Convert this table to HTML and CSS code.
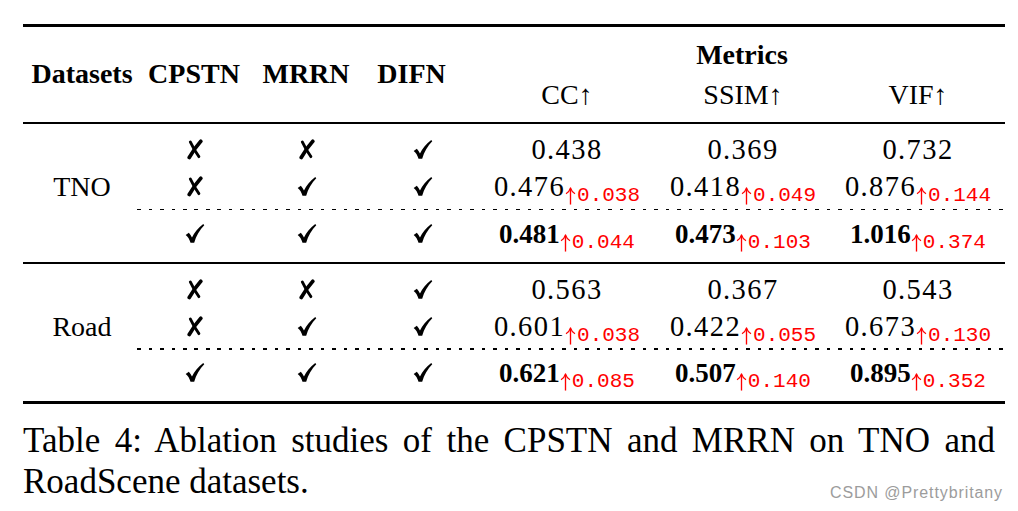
FILE: index.html
```html
<!DOCTYPE html>
<html lang="en">
<head>
<meta charset="utf-8">
<title>Table 4: Ablation studies</title>
<link rel="stylesheet" href="styles.css">
</head>
<body>
<svg class="defs" width="0" height="0" aria-hidden="true">
  <defs>
    <symbol id="chk" viewBox="0 0 20 20">
      <path d="M1.6 11.4 L4.6 9.3 C5.8 10.5 6.8 12.1 7.6 13.9 C9.9 8.9 13.6 4.6 18.3 0.9 L19.3 2.1 C14.9 6.4 11.5 12.2 9.7 18.9 L6.2 18.9 C5.3 15.5 3.8 13.2 1.6 11.4 Z"/>
    </symbol>
    <symbol id="crs" viewBox="0 0 20 20">
      <path d="M6 2.8 Q9.4 10.2 14.2 16.8" fill="none" stroke="#000" stroke-width="2.7" stroke-linecap="round"/>
      <path d="M16 2.2 Q10.4 8.4 5 17.6" fill="none" stroke="#000" stroke-width="3.5" stroke-linecap="round"/>
    </symbol>
    <symbol id="up" viewBox="0 0 12 20">
      <path d="M6 19.5 V2" fill="none" stroke="#ff0000" stroke-width="1.5"/>
      <path d="M1 7.5 Q4.6 5.6 6 1 Q7.4 5.6 11 7.5" fill="none" stroke="#ff0000" stroke-width="1.4" stroke-linejoin="round"/>
    </symbol>
  </defs>
</svg>
<main class="page">
  <section class="tbl">
    <div class="rule rule-thick"></div>
    <div class="head">
      <div class="h-side">Datasets</div>
      <div class="h-side">CPSTN</div>
      <div class="h-side">MRRN</div>
      <div class="h-side h-difn">DIFN</div>
      <div class="h-metrics">Metrics</div>
      <div class="h-metric">CC↑</div>
      <div class="h-metric">SSIM↑</div>
      <div class="h-metric">VIF↑</div>
    </div>
    <div class="rule rule-mid"></div>

    <div class="group">
      <div class="row">
        <div class="cell"></div>
        <div class="cell"><svg class="mk"><use href="#crs"/></svg></div>
        <div class="cell"><svg class="mk"><use href="#crs"/></svg></div>
        <div class="cell"><svg class="mk"><use href="#chk"/></svg></div>
        <div class="cell"><span class="num">0.438</span></div>
        <div class="cell"><span class="num">0.369</span></div>
        <div class="cell"><span class="num">0.732</span></div>
      </div>
      <div class="row">
        <div class="cell ds">TNO</div>
        <div class="cell"><svg class="mk"><use href="#crs"/></svg></div>
        <div class="cell"><svg class="mk"><use href="#chk"/></svg></div>
        <div class="cell"><svg class="mk"><use href="#chk"/></svg></div>
        <div class="cell"><span class="num">0.476</span><span class="gain"><svg class="arr"><use href="#up"/></svg>0.038</span></div>
        <div class="cell"><span class="num">0.418</span><span class="gain"><svg class="arr"><use href="#up"/></svg>0.049</span></div>
        <div class="cell"><span class="num">0.876</span><span class="gain"><svg class="arr"><use href="#up"/></svg>0.144</span></div>
      </div>
      <div class="dash"></div>
      <div class="row">
        <div class="cell"></div>
        <div class="cell"><svg class="mk"><use href="#chk"/></svg></div>
        <div class="cell"><svg class="mk"><use href="#chk"/></svg></div>
        <div class="cell"><svg class="mk"><use href="#chk"/></svg></div>
        <div class="cell"><span class="num-b">0.481</span><span class="gain"><svg class="arr"><use href="#up"/></svg>0.044</span></div>
        <div class="cell"><span class="num-b">0.473</span><span class="gain"><svg class="arr"><use href="#up"/></svg>0.103</span></div>
        <div class="cell"><span class="num-b">1.016</span><span class="gain"><svg class="arr"><use href="#up"/></svg>0.374</span></div>
      </div>
    </div>
    <div class="rule rule-mid"></div>

    <div class="group">
      <div class="row">
        <div class="cell"></div>
        <div class="cell"><svg class="mk"><use href="#crs"/></svg></div>
        <div class="cell"><svg class="mk"><use href="#crs"/></svg></div>
        <div class="cell"><svg class="mk"><use href="#chk"/></svg></div>
        <div class="cell"><span class="num">0.563</span></div>
        <div class="cell"><span class="num">0.367</span></div>
        <div class="cell"><span class="num">0.543</span></div>
      </div>
      <div class="row">
        <div class="cell ds">Road</div>
        <div class="cell"><svg class="mk"><use href="#crs"/></svg></div>
        <div class="cell"><svg class="mk"><use href="#chk"/></svg></div>
        <div class="cell"><svg class="mk"><use href="#chk"/></svg></div>
        <div class="cell"><span class="num">0.601</span><span class="gain"><svg class="arr"><use href="#up"/></svg>0.038</span></div>
        <div class="cell"><span class="num">0.422</span><span class="gain"><svg class="arr"><use href="#up"/></svg>0.055</span></div>
        <div class="cell"><span class="num">0.673</span><span class="gain"><svg class="arr"><use href="#up"/></svg>0.130</span></div>
      </div>
      <div class="dash"></div>
      <div class="row">
        <div class="cell"></div>
        <div class="cell"><svg class="mk"><use href="#chk"/></svg></div>
        <div class="cell"><svg class="mk"><use href="#chk"/></svg></div>
        <div class="cell"><svg class="mk"><use href="#chk"/></svg></div>
        <div class="cell"><span class="num-b">0.621</span><span class="gain"><svg class="arr"><use href="#up"/></svg>0.085</span></div>
        <div class="cell"><span class="num-b">0.507</span><span class="gain"><svg class="arr"><use href="#up"/></svg>0.140</span></div>
        <div class="cell"><span class="num-b">0.895</span><span class="gain"><svg class="arr"><use href="#up"/></svg>0.352</span></div>
      </div>
    </div>
    <div class="rule rule-thick"></div>
  </section>

  <p class="caption">Table 4: Ablation studies of the CPSTN and MRRN on TNO and <span class="cap-l2">RoadScene datasets.</span></p>
  <div class="wm">CSDN @Prettybritany</div>
</main>
</body>
</html>
```

FILE: styles.css
```css
html, body {
  margin: 0;
  padding: 0;
  background: #fff;
}

.defs {
  position: absolute;
  width: 0;
  height: 0;
  overflow: hidden;
}

.page {
  position: relative;
  width: 1018px;
  height: 511px;
  padding: 24px 0 0 23px;
  box-sizing: border-box;
  color: #000;
  font-family: "Liberation Serif", "Times New Roman", serif;
}

.tbl {
  width: 982px;
}

.rule {
  background: #000;
}
.rule-thick { height: 3px; }
.rule-mid { height: 2px; }

.head,
.row {
  display: grid;
  grid-template-columns: 118px 106px 118px 114px 176px 176px 174px;
  text-align: center;
}

.head {
  grid-template-rows: 44px 51px;
  font-size: 28px;
}

.h-side {
  grid-row: 1 / 3;
  display: flex;
  align-items: center;
  justify-content: center;
  font-weight: bold;
  line-height: 32px;
  padding-bottom: 2px;
}

.h-difn {
  padding-right: 21px;
}

.h-metrics {
  grid-column: 5 / 8;
  grid-row: 1;
  font-weight: bold;
  line-height: 32px;
  padding-top: 12px;
}

.h-metric {
  grid-row: 2;
  line-height: 32px;
  padding-top: 8px;
}

.group {
  padding: 7px 0 10px;
}

.row {
  height: 37px;
  line-height: 37px;
  font-size: 28.5px;
  white-space: nowrap;
}

.ds {
  font-size: 28px;
}

.mk {
  width: 21px;
  height: 21px;
  vertical-align: -1px;
  fill: #000;
}

.num {
  letter-spacing: 1.4px;
}

.num-b {
  font-weight: bold;
  font-size: 27px;
}

.gain {
  font-family: "Liberation Mono", "DejaVu Sans Mono", monospace;
  font-size: 21px;
  line-height: 1;
  color: #ff0000;
  vertical-align: -5px;
}

.arr {
  width: 11px;
  height: 18px;
  margin-right: 1px;
  vertical-align: -4px;
}

.dash {
  height: 1.5px;
  margin: 3.5px 0 4.5px 114px;
  background: repeating-linear-gradient(90deg, #000 0 3.5px, transparent 3.5px 11.5px);
}

.caption {
  margin: 16px 0 0;
  width: 972px;
  font-size: 35px;
  line-height: 41px;
  text-align: justify;
}

.wm {
  position: absolute;
  right: 15px;
  top: 484px;
  font-family: "Liberation Sans", Arial, sans-serif;
  font-size: 16px;
  letter-spacing: 0.9px;
  color: #9c9c9c;
}
```
